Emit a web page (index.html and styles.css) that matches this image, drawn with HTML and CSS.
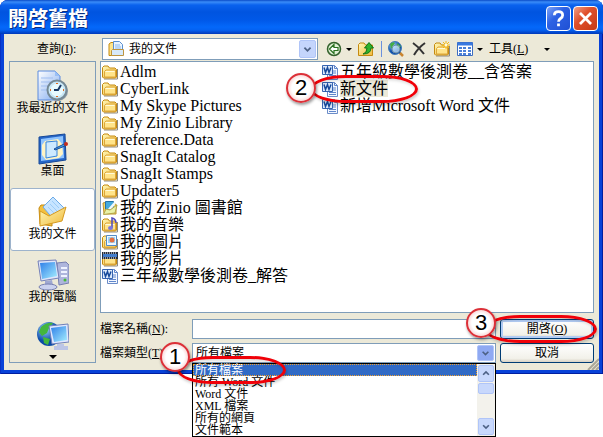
FILE: index.html
```html
<!DOCTYPE html>
<html lang="zh-Hant">
<head>
<meta charset="utf-8">
<title>開啓舊檔</title>
<link rel="stylesheet" href="styles.css">
</head>
<body>
<svg class="defs" aria-hidden="true">
  <defs>
    <linearGradient id="gold" x1="0" y1="0" x2="1" y2="1"><stop offset="0" stop-color="#fff8b8"/><stop offset="1" stop-color="#f0b93a"/></linearGradient>
    <linearGradient id="paper" x1="0" y1="0" x2="1" y2="1"><stop offset="0" stop-color="#fff"/><stop offset="1" stop-color="#7faaf0"/></linearGradient>
    <linearGradient id="screen" x1="0" y1="0" x2="1" y2="1"><stop offset="0" stop-color="#2f7fe8"/><stop offset="1" stop-color="#a5eeff"/></linearGradient>
    <radialGradient id="globe" cx=".35" cy=".3"><stop offset="0" stop-color="#9fd4ff"/><stop offset="1" stop-color="#0b4ba8"/></radialGradient>
    <symbol id="folder" viewBox="0 0 16 16">
      <path d="M2 15h13.500V5" fill="none" stroke="#8d8a80"/>
      <path d="M.5 13V3.500L2 2h4l1.500 2H13l1.500 1.500V13l-1 1h-12z" fill="url(#gold)" stroke="#c58a10"/>
      <path d="M2.500 13V7.500L4 6h9.500v7z" fill="#ffe48a" stroke="#dca63a"/>
      <path d="M3.500 7.500h9" stroke="#fffbd8"/>
    </symbol>
    <symbol id="word" viewBox="0 0 16 16">
      <path d="M5.500 1.500h7l3 3v11h-10z" fill="#f4f8ff" stroke="#6b8cc8"/>
      <path d="M12.500 1.500v3h3M11 7h3M11 9h3M7 11.500h7M7 13.500h7" fill="none" stroke="#5f86cc"/>
      <path d="M.5 1.500h10v9H.5z" fill="#dce9fb" stroke="#3765b2"/>
      <path d="M2 3.500l1.500 5 2-5 1.500 5 2-5" fill="none" stroke="#174a9c" stroke-width="1.500"/>
    </symbol>
  </defs>
</svg>

<main class="dialog">
  <header class="titlebar">
    <h1>開啓舊檔</h1>
    <button class="caption help" type="button" aria-label="說明"><svg viewBox="0 0 25 25"><path d="M8 9q0-4 4.500-4T17 9q0 2-2.300 3.500T12.500 16M12.500 18v3" fill="none" stroke="#fff" stroke-width="3"/></svg></button>
    <button class="caption close" type="button" aria-label="關閉"><svg viewBox="0 0 25 25"><path d="M6.500 6.500l12 12m0-12l-12 12" stroke="#fff" stroke-width="3"/></svg></button>
  </header>

  <div class="content">
    <div class="toolbar">
      <label for="lookin">查詢(<u>I</u>):</label>
      <div class="combo lookin">
        <svg class="combo-icon" viewBox="0 0 16 16"><path d="M1 14.500V3l2-1.500h4v13z" fill="#ffe48a" stroke="#c58a10"/><path d="M5.500.5h6l3 3V11h-9z" fill="#eaf4ff" stroke="#5a8fd0"/><path d="M7 4h5M7 6h6M7 8h6" stroke="#8ab8ee"/><path d="M3.500 14.500v-5l1-1h11v6z" fill="#d7e9fa" stroke="#bd9440"/></svg>
        <select id="lookin"><option>我的文件</option></select>
        <svg class="chevron" viewBox="0 0 17 17"><path d="M5 7l3.500 3.500L12 7" fill="none" stroke="#4d6185" stroke-width="2"/></svg>
      </div>
      <div class="tools">
        <button class="tool split" type="button" aria-label="上一頁"><svg class="icon" viewBox="0 0 16 16"><circle cx="8" cy="8" r="6.500" fill="#dff0d4" stroke="#33612c" stroke-width="1.500"/><path d="M3.500 8L8 3.500V6.500h4v3H8v3z" fill="#fff" stroke="#28701f" stroke-width="1.200"/></svg><i class="caret"></i></button>
        <button class="tool" type="button" aria-label="上移一層"><svg class="icon" viewBox="0 0 16 16"><path d="M.5 14.500v-11L2 2h4l1.500 2h7v10.500z" fill="url(#gold)" stroke="#c58a10"/><path d="M5 13q4-1 4-6H6.500L11 1.500 15.500 7H13q0 6-8 6z" fill="#2fb32c" stroke="#137315"/></svg></button>
        <span class="rule"></span>
        <button class="tool" type="button" aria-label="搜尋網頁"><svg class="icon" viewBox="0 0 16 16"><circle cx="7" cy="7" r="6.500" fill="url(#globe)" stroke="#437cb8"/><path d="M2 3q3-3 5-1L5 5 3 8zM9 2l4 3-2 3-2-2z" fill="#44ad45"/><circle cx="8" cy="8" r="4" fill="#d2eeff" fill-opacity=".7" stroke="#6d90a8"/><path d="M11 11l1.500 1.500" stroke="#24559c" stroke-width="2"/><path d="M12 12l3 3" stroke="#c98530" stroke-width="2.500"/></svg></button>
        <button class="tool" type="button" aria-label="刪除"><svg class="icon" viewBox="0 0 16 16"><path d="M2 2q6 4 11 11M14 2Q7 7 3 14" fill="none" stroke="#333" stroke-width="2"/></svg></button>
        <button class="tool" type="button" aria-label="建立新資料夾"><svg class="icon" viewBox="0 0 16 16"><use href="#folder"/><path d="M12 0v8M8 4h8M9 1l6 6m0-6L9 7" stroke="#f6b80e"/><circle cx="12" cy="4" r="1.500" fill="#fffbe0"/></svg></button>
        <button class="tool split" type="button" aria-label="檢視"><svg class="icon" viewBox="0 0 16 16"><path d="M.5 1.500h15v13H.5z" fill="#fff" stroke="#3d6dc0"/><path d="M.5 3h15" stroke="#3979e0" stroke-width="3"/><path d="M2 7h3m1 0h3m2 0h3M2 10h3m1 0h3m2 0h3M2 13h3m1 0h3m2 0h3" stroke="#4a80d8" stroke-width="2"/></svg><i class="caret"></i></button>
        <button class="tool menu" type="button"><span>工具(<u>L</u>)</span><i class="caret"></i></button>
      </div>
    </div>

    <div class="workspace">
      <nav class="places">
        <a href="#recent"><svg viewBox="0 0 32 32"><path d="M1 1h17l5 5v24H1z" fill="url(#paper)" stroke="#5a8add"/><path d="M18 1v5h5" fill="#9abff5"/><path d="M4 8h12M4 12h12M4 16h8M4 20h7" stroke="#9fbdf0"/><circle cx="21" cy="21" r="10" fill="#8d9ba5"/><circle cx="20" cy="20" r="9.500" fill="#c8e7f5" stroke="#758995" stroke-width="2"/><circle cx="20" cy="20" r="6.500" fill="#e8fbff"/><path d="M20 13v1M20 26v1M13 20h1M26 20h1" stroke="#e46a20" stroke-width="2"/><path d="M17 20h4l3-5" fill="none" stroke="#183965" stroke-width="2"/></svg><span>我最近的文件</span></a>
        <a href="#desktop"><svg viewBox="0 0 32 32"><path d="M2 4L28 1l1 26-27 4z" fill="#2667c8" stroke="#164898"/><path d="M4 6l22-3 1 22-23 3z" fill="#8fc4ff"/><path d="M8 8l13-2 4 5 1 10-4 4-13 2-4-5V12z" fill="#fff4c4"/><path d="M9 9l11-1v15l-11 2z" fill="#cdeaff" stroke="#3585dd"/><path d="M17 16l10-5 1 2-10 4z" fill="#479ae8" stroke="#174f99"/><circle cx="29" cy="11" r="2" fill="#c42c1d"/></svg><span>桌面</span></a>
        <a href="#documents" class="current"><svg viewBox="0 0 32 32"><path d="M2 12l2-3h8l3 4v17l-12-2z" fill="#f3c03f" stroke="#c58a10"/><path d="M16 1l11 11-9 13L6 11z" fill="#c7e4ff" stroke="#6cabe8"/><path d="M15 5l7 7M13 8l7 7M11 11l7 7" stroke="#9ccdf8"/><path d="M3 30V15l9 5 17-9-4 14z" fill="url(#gold)" stroke="#d69a20"/></svg><span>我的文件</span></a>
        <a href="#computer"><svg viewBox="0 0 32 32"><path d="M20 4l9-1 3 3v18l-10 2z" fill="#aeb5dc" stroke="#777faf"/><path d="M24 9h6M24 13h6M24 17h6" stroke="#eef2ff" stroke-width="2"/><circle cx="28" cy="21" r="1.500" fill="#45bb35"/><path d="M1 2l18-1 3 18-18 3z" fill="#dfe5fa" stroke="#7480b8"/><path d="M3 4l15-1 2 14L5 20z" fill="url(#screen)"/><path d="M8 22l7-1 1 5H8z" fill="#9fa8d2"/><ellipse cx="11" cy="28" rx="9" ry="3" fill="#cbd2ef" stroke="#7880b0"/></svg><span>我的電腦</span></a>
        <a href="#network" class="clipped"><svg viewBox="0 0 32 28"><circle cx="12" cy="12" r="12" fill="url(#globe)"/><path d="M4 5q6-5 12-4l-4 5-2 5-5 3-3-4zM6 15l7 2-2 6-4-2z" fill="#43b63d"/><path d="M12 4l19-2 1 18-17 2z" fill="#e0e7ff" stroke="#7080b8"/><path d="M14 6l15-2 1 14-13 2z" fill="url(#screen)"/><path d="M20 22h7v2h4v4H17v-4h3z" fill="#bcc5e6"/></svg></a>
        <button class="more" type="button" aria-label="更多"><i class="caret wide"></i></button>
      </nav>

      <div class="main">
        <ul class="files">
          <li><svg><use href="#folder"/></svg><span>Adlm</span></li>
          <li><svg><use href="#folder"/></svg><span>CyberLink</span></li>
          <li><svg><use href="#folder"/></svg><span>My Skype Pictures</span></li>
          <li><svg><use href="#folder"/></svg><span>My Zinio Library</span></li>
          <li><svg><use href="#folder"/></svg><span>reference.Data</span></li>
          <li><svg><use href="#folder"/></svg><span>SnagIt Catalog</span></li>
          <li><svg><use href="#folder"/></svg><span>SnagIt Stamps</span></li>
          <li><svg><use href="#folder"/></svg><span>Updater5</span></li>
          <li><svg viewBox="0 0 16 16"><path d="M1 3l4-1 9 2v10H2z" fill="#f7d760" stroke="#bd9230"/><path d="M3.500 1.500h8v8h-8z" fill="#44aadd" stroke="#2472a7"/><path d="M6 9l6-7 2 1-5 7z" fill="#eff9ff"/><path d="M1.500 14.500L4 9l4 1 7-5-2 8z" fill="#e9f2a8" stroke="#b3a548"/></svg><span>我的 Zinio 圖書館</span></li>
          <li><svg viewBox="0 0 16 16"><use href="#folder"/><path d="M10 11V1q4 1 4 5" fill="none" stroke="#4c47bd" stroke-width="1.500"/><ellipse cx="8.500" cy="11" rx="2.500" ry="2" fill="#7a77e0"/></svg><span>我的音樂</span></li>
          <li><svg viewBox="0 0 16 16"><use href="#folder"/><path d="M4.500 1.500h10v10h-10z" fill="#f0f8ff" stroke="#538bc7"/><path d="M6 3h7v6H6z" fill="#9bd4fa"/><circle cx="10" cy="6" r="2.500" fill="#e76f40"/></svg><span>我的圖片</span></li>
          <li><svg viewBox="0 0 16 16"><use href="#folder"/><path d="M0 1h16v7H0z" fill="#252c3c"/><path d="M1 2h14M1 7h14" stroke="#fff" stroke-dasharray="1 1"/><path d="M1 4.500h14" stroke="#427dcc" stroke-width="3"/></svg><span>我的影片</span></li>
          <li><svg><use href="#word"/></svg><span>三年級數學後測卷_解答</span></li>
          <li><svg><use href="#word"/></svg><span>五年級數學後測卷__含答案</span></li>
          <li class="selected"><svg><use href="#word"/></svg><span>新文件</span>
            <div class="callout callout-file"><b>2</b></div></li>
          <li><svg><use href="#word"/></svg><span>新增Microsoft Word 文件</span></li>
        </ul>

        <form class="fields">
          <label for="filename">檔案名稱(<u>N</u>):</label>
          <input id="filename" type="text">
          <div class="action"><button class="push default" type="button">開啓(<u>O</u>)</button><div class="callout callout-open"><b>3</b></div></div>
          <label for="filetype">檔案類型(<u>T</u>):</label>
          <div class="combo filetype">
            <select id="filetype"><option>所有檔案</option></select>
            <svg class="chevron open" viewBox="0 0 17 17"><path d="M5 7l3.500 3.500L12 7" fill="none" stroke="#4d6185" stroke-width="2"/></svg>
            <div class="dropdown">
              <ul role="listbox" aria-label="檔案類型">
                <li role="option" aria-selected="true">所有檔案</li>
                <li role="option">所有 Word 文件</li>
                <li role="option">Word 文件</li>
                <li role="option">XML 檔案</li>
                <li role="option">所有的網頁</li>
                <li role="option">文件範本</li>
              </ul>
              <div class="scrollbar">
                <button type="button" aria-label="向上捲動"><svg viewBox="0 0 17 17"><path d="M5 10l3.500-3.500L12 10" fill="none" stroke="#4d6185" stroke-width="2"/></svg></button>
                <i class="thumb"></i>
                <button class="down" type="button" aria-label="向下捲動"><svg viewBox="0 0 17 17"><path d="M5 7l3.500 3.500L12 7" fill="none" stroke="#4d6185" stroke-width="2"/></svg></button>
              </div>
            </div>
            <div class="callout callout-type"><b>1</b></div>
          </div>
          <button class="push" type="button">取消</button>
        </form>
      </div>
    </div>
    <svg class="grip" viewBox="0 0 12 12"><path d="M1 12L12 1M5 12l7-7M9 12l3-3" stroke="#aaa797" stroke-width="2"/></svg>
  </div>
</main>
</body>
</html>
```
FILE: styles.css
```css
* { box-sizing: border-box; }

body {
  min-height: 100vh;
  margin: 0;
  background: #fff;
  color: #000;
  font: 12px/16px "Liberation Serif", "Noto Sans CJK TC", serif;
}

button, input, select { font: inherit; color: inherit; margin: 0; }
button { padding: 0; border: 0; background: none; }
ul { margin: 0; padding: 0; list-style: none; }
svg { display: block; }
.defs { position: absolute; width: 0; height: 0; }

.dialog {
  padding: 0 4px 4px;
  border-radius: 8px 8px 0 0;
  background: #0842d8;
  box-shadow: inset 1px 0 #0831c4, inset -1px -1px #001ea0;
}

.titlebar {
  display: flex;
  align-items: center;
  gap: 2px;
  height: 34px;
  margin: 0 -4px;
  padding: 3px 5px 0 8px;
  border-radius: 8px 8px 0 0;
  background: linear-gradient(#0a4bc8 0, #3a8cf8 2px, #0a62ee 5px, #0054e0 12px, #0058e8 20px, #0468fa 27px, #0462f2 30px, #0038b8 34px);
}
.titlebar h1 {
  flex: 1;
  margin: 0;
  color: #fff;
  font: bold 20px/24px "Liberation Serif", "Noto Sans CJK TC", serif;
  text-shadow: 1px 1px #0a2e80;
}
.caption {
  width: 25px;
  height: 25px;
  border: 1px solid #fff;
  border-radius: 4px;
}
.caption svg { width: 23px; height: 23px; }
.help { background: linear-gradient(135deg, #7ea4f6, #2e62e4 40%, #1f50d4); }
.close { background: linear-gradient(135deg, #f0a085, #e0502c 40%, #c63a14); }

.content {
  position: relative;
  padding: 3px 5px 7px;
  background: #ece9d8;
}

.toolbar { display: flex; align-items: center; height: 24px; }
.toolbar > label { width: 93px; padding-left: 28px; }

.combo {
  position: relative;
  border: 1px solid #7f9db9;
  background: #fff;
}
.combo select {
  display: block;
  width: 100%;
  height: 18px;
  padding: 0 20px 0 3px;
  border: 0;
  background: transparent;
  appearance: none;
  line-height: 18px;
}
.lookin { flex: 1; }
.lookin select { height: 20px; padding-left: 26px; }
.combo-icon { position: absolute; left: 5px; top: 2px; width: 16px; height: 16px; }
.chevron {
  position: absolute;
  top: 1px;
  right: 1px;
  width: 17px;
  height: calc(100% - 2px);
  border: 1px solid #b0c5f8;
  border-radius: 2px;
  background: #c4d5fc;
  pointer-events: none;
}
.chevron.open { background: #8fa9f2; }

.tools { display: flex; align-items: center; width: 276px; padding-left: 8px; }
.tool { display: flex; align-items: center; gap: 4px; margin-right: 7px; }
.tool.split { margin-right: 6px; }
.icon { width: 16px; height: 16px; }
.rule { width: 1px; height: 16px; margin-right: 6px; background: #6b91dd; }
.menu { gap: 16px; }
.caret {
  border: 3px solid transparent;
  border-top-color: #000;
  border-bottom: 0;
}
.caret.wide { border-width: 4px 4px 0; }

.workspace { display: flex; gap: 4px; }

.places {
  display: flex;
  flex-direction: column;
  width: 87px;
  border: 1px solid #7f9db9;
}
.places a {
  display: flex;
  flex-direction: column;
  align-items: center;
  height: 63px;
  padding-top: 7px;
  border: 1px solid transparent;
  color: #000;
  text-decoration: none;
}
.places a svg { width: 32px; height: 32px; }
.places a span { line-height: 12px; white-space: nowrap; }
.places .current { border-color: #9db3cc; border-radius: 3px; background: #fff; }
.places .clipped { height: 37px; }
.places .clipped svg { height: 28px; }
.more { display: flex; flex: 1; align-items: center; justify-content: center; }

.main { flex: 1; min-width: 0; }

.files {
  display: grid;
  grid-auto-flow: column;
  grid-template-rows: repeat(13, 17px);
  grid-template-columns: 220px 1fr;
  height: 252px;
  padding: 1px;
  border: 1px solid #7f9db9;
  background: #fff;
  font-size: 16px;
  line-height: 17px;
}
.files li {
  position: relative;
  display: flex;
  align-items: center;
  gap: 2px;
  white-space: nowrap;
}
.files svg { flex: none; width: 16px; height: 16px; }
.files .selected > span { background: #ece9d8; }

.fields {
  display: grid;
  grid-template-columns: 88px 1fr 94px;
  column-gap: 4px;
  row-gap: 4px;
  align-items: center;
  padding-top: 6px;
}
.fields input {
  width: 100%;
  height: 20px;
  padding: 0 3px;
  border: 1px solid #7f9db9;
  background: #fff;
}
.fields label { white-space: nowrap; }
.fields .combo { height: 20px; }
.action { position: relative; }
.push {
  display: block;
  width: 100%;
  height: 20px;
  border: 1px solid #003c74;
  border-radius: 3px;
  background: linear-gradient(#fff, #f2f1ea 80%, #d8d2c4);
}
.push.default { box-shadow: inset 0 0 0 2px #b2ccf4; }

.dropdown {
  position: absolute;
  z-index: 1;
  top: 19px;
  left: -1px;
  right: -1px;
  display: flex;
  border: 1px solid #000;
  background: #fff;
}
.dropdown ul { flex: 1; }
.dropdown li { height: 12px; padding-left: 2px; line-height: 12px; }
.dropdown [aria-selected] {
  outline: 1px dotted #f0a030;
  outline-offset: -1px;
  background: #316ac5;
  color: #fff;
}
.scrollbar { display: flex; flex-direction: column; width: 18px; padding: 1px; background: #f3f2ec; }
.scrollbar button, .thumb {
  height: 17px;
  border: 1px solid #b0c5f8;
  border-radius: 2px;
  background: #c8d8fc;
}
.scrollbar svg { width: 14px; height: 15px; }
.thumb { height: 11px; margin-top: 1px; }
.scrollbar .down { margin-top: auto; }

.callout {
  position: absolute;
  z-index: 2;
  height: 28px;
  border: 3px solid #f00008;
  border-radius: 36px / 50%;
  box-shadow: 1px 2px 3px #0003, inset 1px 2px 3px #0002;
  pointer-events: none;
}
.callout b {
  position: absolute;
  width: 30px;
  height: 30px;
  border: 2px solid #dc3038;
  border-radius: 50%;
  background: radial-gradient(#fff 50%, #f3a8a8);
  box-shadow: 1px 2px 3px #0006;
  font: 22px/26px "Liberation Sans", sans-serif;
  text-align: center;
}
.callout-file { left: -12px; top: -5px; width: 108px; }
.callout-file b { left: -27px; top: -5px; }
.callout-open { left: -16px; top: -4px; width: 113px; }
.callout-open b { left: -21px; top: -10px; }
.callout-type { left: -16px; top: 12px; width: 109px; }
.callout-type b { left: -20px; top: -17px; }

.grip { position: absolute; right: 0; bottom: 0; width: 12px; height: 12px; }
```
